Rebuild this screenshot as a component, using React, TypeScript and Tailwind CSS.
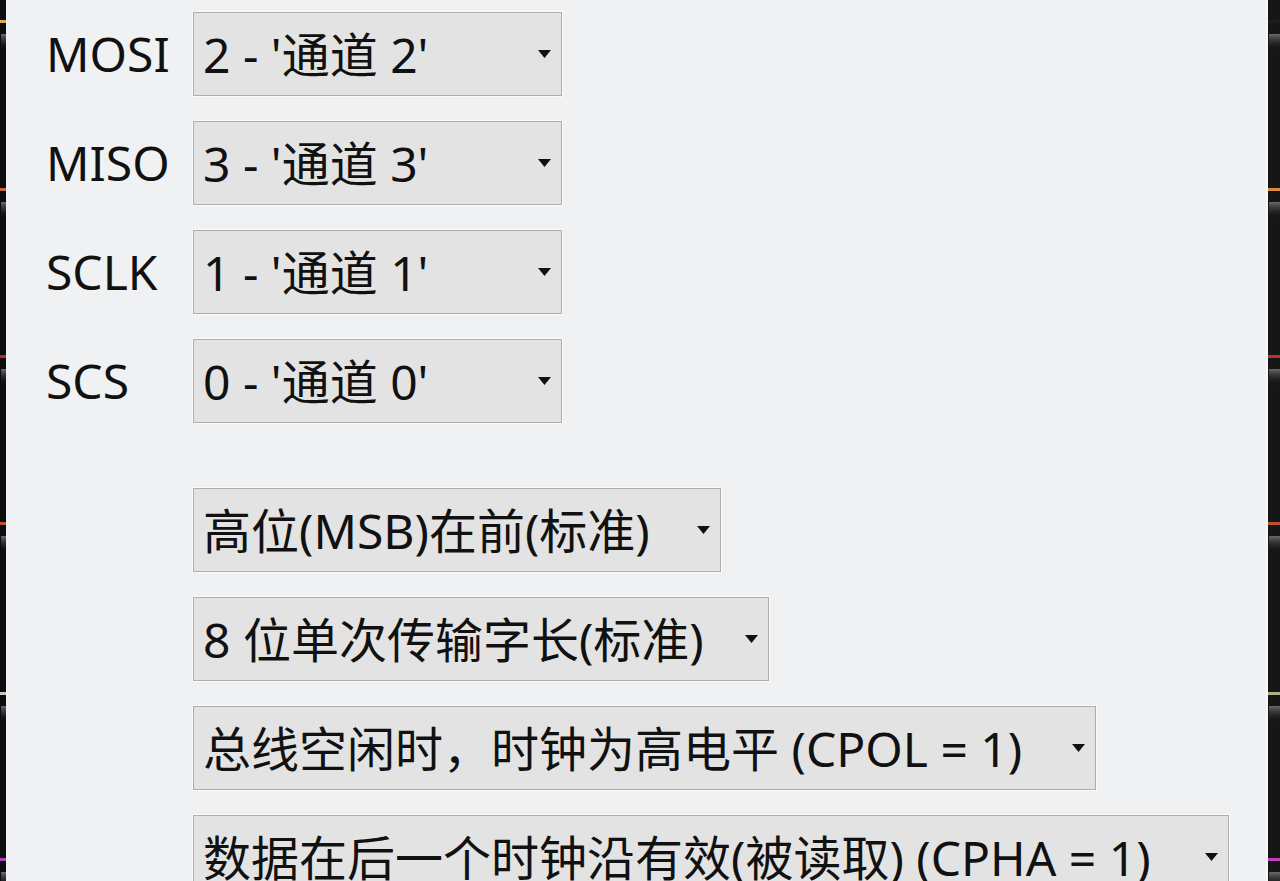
import React from "react";

const font = { fontFamily: '"Noto Sans", "Noto Sans CJK SC", sans-serif' };

const pins = [
  { label: "MOSI", value: "2 - '通道 2'" },
  { label: "MISO", value: "3 - '通道 3'" },
  { label: "SCLK", value: "1 - '通道 1'" },
  { label: "SCS", value: "0 - '通道 0'" },
];

const options = [
  { value: "高位(MSB)在前(标准)", width: "w-[528px]" },
  { value: "8 位单次传输字长(标准)", width: "w-[576px]" },
  { value: "总线空闲时，时钟为高电平 (CPOL = 1)", width: "w-[903px]" },
  { value: "数据在后一个时钟沿有效(被读取) (CPHA = 1)", width: "w-[1036px]" },
];

function Arrow() {
  return (
    <svg width="13" height="8" viewBox="0 0 13 8" className="shrink-0">
      <path d="M0 0 H13 L6.5 8 Z" fill="#111" />
    </svg>
  );
}

function Select({ value, width }: { value: string; width: string }) {
  return (
    <div
      className={`${width} h-[84px] flex items-center justify-between border border-[#adadad] bg-[#e3e3e3] pl-[9px] pr-[10px] shadow-[0_0_0_1px_#fbfbfb]`}
    >
      <span className="text-[48px] leading-none text-[#111] whitespace-nowrap pt-[2px]">{value}</span>
      <Arrow />
    </div>
  );
}

// the dark edges of the window behind, with their trace marks
function Strip({ colors, width }: { colors: string[]; width: number }) {
  const ys = [20, 188, 355, 522, 692, 858];
  return (
    <svg width={width} height="881" className="block shrink-0">
      <defs>
        <linearGradient id={`g${width}`} x1="0" y1="0" x2="0" y2="1">
          <stop offset="0" stopColor="#6a6a6e" />
          <stop offset="1" stopColor="#1a1a1c" stopOpacity="0" />
        </linearGradient>
      </defs>
      <rect width={width} height="881" fill={width > 8 ? "#161617" : "#0c0c0e"} />
      {ys.map((y, i) => (
        <g key={y}>
          <rect x="0" y={y} width={width} height="3" fill={colors[i]} />
          <rect x="1" y={y + 14} width={width - 1} height="16" fill={`url(#g${width})`} />
        </g>
      ))}
    </svg>
  );
}

export default function App() {
  return (
    <div className="flex h-[881px] w-full overflow-hidden bg-black" style={font}>
      <Strip width={6} colors={["#d9a94a", "#c06a3a", "#b03030", "#c05030", "#c8c8c0", "#b040c0"]} />
      <div className="flex-1 bg-[#f0f1f3] border-r-2 border-[#f8f8f8] pl-[40px] pt-[12px]">
        <div className="flex flex-col gap-[25px]">
          {pins.map((p) => (
            <div key={p.label} className="flex items-center">
              <span className="w-[147px] text-[48px] leading-none text-[#111]">{p.label}</span>
              <Select value={p.value} width="w-[369px]" />
            </div>
          ))}
        </div>
        <div className="mt-[65px] pl-[147px] flex flex-col gap-[25px]">
          {options.map((o) => (
            <Select key={o.value} value={o.value} width={o.width} />
          ))}
        </div>
      </div>
      <Strip width={12} colors={["#1c1c1c", "#d98a40", "#c03030", "#c05030", "#b0b080", "#c040c0"]} />
    </div>
  );
}
